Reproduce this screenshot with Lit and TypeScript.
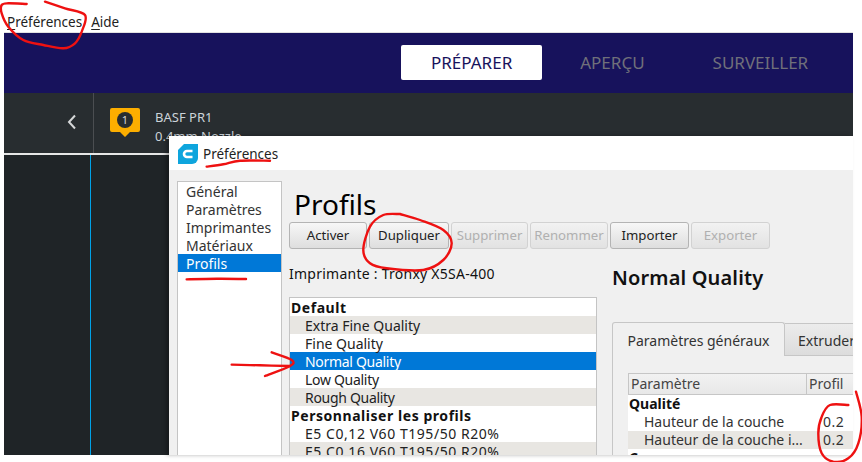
import { LitElement, html, css, svg } from "lit";
import { customElement } from "lit/decorators.js";

type P = [number, number];

function smooth(pts: P[]): string {
  let d = `M${pts[0][0]} ${pts[0][1]}`;
  for (let i = 0; i < pts.length - 1; i++) {
    const p0 = pts[Math.max(0, i - 1)];
    const p1 = pts[i];
    const p2 = pts[i + 1];
    const p3 = pts[Math.min(pts.length - 1, i + 2)];
    const c1x = p1[0] + (p2[0] - p0[0]) / 6;
    const c1y = p1[1] + (p2[1] - p0[1]) / 6;
    const c2x = p2[0] - (p3[0] - p1[0]) / 6;
    const c2y = p2[1] - (p3[1] - p1[1]) / 6;
    d += ` C${c1x.toFixed(1)} ${c1y.toFixed(1)} ${c2x.toFixed(1)} ${c2y.toFixed(1)} ${p2[0].toFixed(1)} ${p2[1].toFixed(1)}`;
  }
  return d;
}

const z = (ox: number, oy: number, pts: P[]): P[] => pts.map(([x, y]) => [ox + x / 3, oy + y / 3] as P);

const MARKS: P[][] = [
  z(0, 0, [[80, 12], [25, 10], [5, 15], [5, 40], [25, 80], [70, 120], [130, 135], [190, 145], [225, 130], [245, 95], [255, 45], [195, 25], [135, 5]]),
  z(160, 130, [[140, 110], [190, 103], [240, 92], [330, 92]]),
  z(170, 170, [[50, 328], [140, 326], [228, 327]]),
  z(170, 170, [[690, 132], [640, 135], [600, 170], [580, 240], [600, 280], [650, 295], [760, 300], [820, 270], [845, 220], [820, 180], [750, 150], [690, 132]]),
  z(170, 290, [[185, 224], [270, 226], [360, 228]]),
  z(170, 290, [[305, 187], [365, 210], [360, 228], [285, 258]]),
  z(600, 320, [[745, 255], [690, 255], [665, 290], [655, 340], [665, 400], [700, 425], [745, 415], [775, 370], [785, 290], [768, 215]]),
];

const SIDE = ["Général", "Paramètres", "Imprimantes", "Matériaux", "Profils"];
const BUTTONS: [string, boolean, number][] = [
  ["Activer", true, 78],
  ["Dupliquer", true, 80],
  ["Supprimer", false, 77],
  ["Renommer", false, 78],
  ["Importer", true, 79],
  ["Exporter", false, 79],
];
const ROWS: [string, string][] = [
  ["group", "Default"],
  ["alt", "Extra Fine Quality"],
  ["", "Fine Quality"],
  ["sel tight", "Normal Quality"],
  ["tight", "Low Quality"],
  ["alt tight", "Rough Quality"],
  ["group", "Personnaliser les profils"],
  ["wide", "E5 C0,12 V60 T195/50 R20%"],
  ["alt wide", "E5 C0,16 V60 T195/50 R20%"],
];

@customElement("app-root")
export class AppRoot extends LitElement {
  static styles = css`
    :host {
      display: block;
      position: relative;
      width: 862px;
      height: 462px;
      overflow: hidden;
      background: #fff;
      font-family: "Noto Sans", "Open Sans", sans-serif;
      font-size: 14px;
      color: #111;
    }
    .menu {
      display: flex;
      gap: 9px;
      height: 32px;
      padding: 11px 0 0 7px;
      box-sizing: border-box;
      line-height: 22px;
      font-size: 13.5px;
      color: #222;
    }
    .menu u { text-underline-offset: 2px; }
    .window {
      margin-left: 4px;
      width: 849px;
      height: 423px;
      display: flex;
      flex-direction: column;
      border-top: 1px solid #e2e2e2;
      box-sizing: border-box;
    }
    .nav {
      height: 60px;
      background: #17125c;
      display: flex;
      align-items: center;
      gap: 8px;
      padding: 0 0 1px 397px;
      box-sizing: border-box;
      font-size: 17px;
      color: #70707a;
    }
    .tab {
      height: 35px;
      line-height: 35px;
      padding: 0 30px;
      border-radius: 2px;
    }
    .tab.on { background: #fff; color: #17125c; }
    .sub {
      height: 60px;
      background: #282d30;
      border-bottom: 2px solid #e6e6e6;
      display: flex;
      align-items: center;
      flex: none;
    }
    .back {
      width: 90px;
      height: 60px;
      border-right: 1px solid #4b4e51;
      display: flex;
      align-items: center;
      justify-content: flex-end;
      padding: 0 16px 2px 0;
      box-sizing: border-box;
    }
    .badge { margin: 0 15px 0 16px; flex: none; }
    .printer { font-size: 13px; color: #ccd3d9; line-height: 19px; padding-top: 7px; }
    .printer span { display: block; }
    .stage { flex: 1; background: #1f2427; }
    .stage i { display: block; width: 1px; height: 100%; margin-left: 86px; background: #00a2e8; }
    .dialog {
      position: absolute;
      left: 169px;
      top: 136px;
      width: 684px;
      height: 319px;
      background: #f0f0f0;
      box-shadow: -3px 0 4px rgba(0, 0, 0, 0.3);
      display: flex;
      flex-direction: column;
      overflow: hidden;
    }
    .title {
      height: 34px;
      flex: none;
      background: #fff;
      display: flex;
      align-items: center;
      gap: 5px;
      padding: 2px 0 0 9px;
      box-sizing: border-box;
      font-size: 13.5px;
      color: #222;
    }
    .body { flex: 1; display: flex; padding: 11px 0 0 8px; gap: 7px; min-height: 0; }
    .side {
      width: 103px;
      flex: none;
      height: 300px;
      background: #fff;
      border: 1px solid #c4c4c4;
      color: #333;
    }
    .side div { height: 18px; line-height: 20px; padding-left: 8px; }
    .side .on { background: #0078d7; color: #fff; }
    .main { flex: 1; min-width: 0; display: flex; flex-direction: column; }
    h1 {
      margin: 0;
      height: 41px;
      padding-left: 5px;
      font-size: 28px;
      font-weight: 400;
      line-height: 47px;
      color: #000;
    }
    .btns { display: flex; gap: 2px; height: 27px; flex: none; }
    .btn {
      box-sizing: border-box;
      height: 27px;
      line-height: 25px;
      text-align: center;
      border: 1px solid #b4b4b4;
      border-radius: 3px;
      background: linear-gradient(#f7f7f7, #dedede);
      color: #222;
      font-size: 13.2px;
      white-space: nowrap;
      overflow: hidden;
    }
    .btn.off { color: #b0b0b0; border-color: #d2d2d2; background: linear-gradient(#f2f2f2, #e2e2e2); }
    .cols { display: flex; gap: 15px; min-width: 0; }
    .left { width: 308px; flex: none; }
    .printer-line { height: 48px; line-height: 50px; color: #111; white-space: nowrap; letter-spacing: 0.25px; }
    .list { border: 1px solid #c4c4c4; border-bottom: 0; background: #fff; height: 170px; box-sizing: border-box; }
    .list div { height: 18px; line-height: 20px; padding-left: 15px; color: #222; white-space: nowrap; }
    .list .group { padding-left: 1px; font-weight: 700; color: #111; letter-spacing: 0.55px; }
    .list .alt { background: #e8e6e2; }
    .list .sel { background: #0078d7; color: #fff; }
    .list .tight { letter-spacing: -0.3px; }
    .list .wide { letter-spacing: 0.55px; }
    .right { flex: 1; min-width: 0; }
    h2 { margin: 0; height: 73px; font-size: 20px; font-weight: 600; line-height: 58px; color: #111; white-space: nowrap; letter-spacing: 0.15px; }
    .tabs { display: flex; height: 34px; align-items: flex-end; }
    .t {
      box-sizing: border-box;
      height: 34px;
      line-height: 36px;
      white-space: nowrap;
      color: #333;
      border: 1px solid #c6c6c6;
      border-bottom: 0;
      border-radius: 3px 3px 0 0;
      background: #f0f0f0;
      width: 173px;
      text-align: center;
    }
    .t.b {
      flex: 1;
      width: auto;
      height: 33px;
      background: linear-gradient(#ececec, #dcdcdc);
      border-right: 0;
      border-left: 0;
      border-bottom: 1px solid #c6c6c6;
      border-radius: 0;
      overflow: hidden;
      text-align: left;
      padding-left: 13px;
      line-height: 33px;
    }
    .pane { padding: 17px 0 0 15px; border-left: 1px solid #c6c6c6; }
    .thead {
      display: flex;
      height: 22px;
      box-sizing: border-box;
      border: 1px solid #c6c6c6;
      border-right: 0;
      background: linear-gradient(#f2f2f2, #e8e8e8);
      line-height: 20px;
      color: #444;
    }
    .thead span:first-child { width: 178px; padding-left: 2px; box-sizing: border-box; border-right: 1px solid #c6c6c6; }
    .thead span:last-child { padding-left: 2px; }
    .tbody { background: #fff; }
    .tr { display: flex; height: 18px; line-height: 18px; color: #333; white-space: nowrap; }
    .tr.alt { background: #e8e6e2; }
    .tr.group { font-weight: 700; color: #111; padding-left: 1px; }
    .tr .n { width: 178px; padding-left: 16px; box-sizing: border-box; overflow: hidden; }
    .tr .v { padding-left: 17px; letter-spacing: 0.5px; }
    .ink { position: absolute; left: 0; top: 0; pointer-events: none; }
    .ink path { fill: none; stroke: #ee1111; stroke-width: 2.4; stroke-linecap: round; stroke-linejoin: round; }
  `;

  render() {
    return html`
      <div class="menu"><span><u>P</u>références</span><span><u>A</u>ide</span></div>
      <div class="window">
        <div class="nav">
          <div class="tab on">PRÉPARER</div>
          <div class="tab">APERÇU</div>
          <div class="tab">SURVEILLER</div>
        </div>
        <div class="sub">
          <div class="back">
            <svg width="10" height="16" viewBox="0 0 10 16"><path d="M8 1.5 2 8l6 6.5" fill="none" stroke="#d5d7d8" stroke-width="2"/></svg>
          </div>
          <svg class="badge" width="30" height="30" viewBox="0 0 30 30">
            <path d="M2 0h26a2 2 0 0 1 2 2v20a2 2 0 0 1-2 2H20l-5 5-5-5H2a2 2 0 0 1-2-2V2a2 2 0 0 1 2-2z" fill="#fcae00"/>
            <circle cx="15" cy="12" r="8" fill="#282d30"/>
            <text x="15" y="16" text-anchor="middle" font-size="11" fill="#d8dadb" font-family="Noto Sans">1</text>
          </svg>
          <div class="printer"><span>BASF PR1</span><span>0.4mm Nozzle</span></div>
        </div>
        <div class="stage"><i></i></div>
      </div>
      <div class="dialog">
        <div class="title">
          <svg width="20" height="20" viewBox="0 0 20 20">
            <path d="M6 0h14v14a6 6 0 0 1-6 6H0V6z" fill="#0ea5dd"/>
            <path d="M14.5 7H9a3 3 0 0 0 0 6h5.5" fill="none" stroke="#fff" stroke-width="2.6"/>
          </svg>
          <span>Préférences</span>
        </div>
        <div class="body">
          <div class="side">
            ${SIDE.map((s) => html`<div class=${s === "Profils" ? "on" : ""}>${s}</div>`)}
          </div>
          <div class="main">
            <h1>Profils</h1>
            <div class="btns">
              ${BUTTONS.map(([t, on, w]) => html`<div class="btn ${on ? "" : "off"}" style="width:${w}px">${t}</div>`)}
            </div>
            <div class="cols">
              <div class="left">
                <div class="printer-line">Imprimante : Tronxy X5SA-400</div>
                <div class="list">${ROWS.map(([c, t]) => html`<div class=${c}>${t}</div>`)}</div>
              </div>
              <div class="right">
                <h2>Normal Quality</h2>
                <div class="tabs"><div class="t">Paramètres généraux</div><div class="t b">Extruder</div></div>
                <div class="pane">
                  <div class="thead"><span>Paramètre</span><span>Profil</span></div>
                  <div class="tbody">
                    <div class="tr group">Qualité</div>
                    <div class="tr"><span class="n">Hauteur de la couche</span><span class="v">0.2</span></div>
                    <div class="tr alt"><span class="n">Hauteur de la couche i...</span><span class="v">0.2</span></div>
                    <div class="tr group">Coque</div>
                  </div>
                </div>
              </div>
            </div>
          </div>
        </div>
      </div>
      <svg class="ink" width="862" height="462" viewBox="0 0 862 462">
        ${MARKS.map((m) => svg`<path d=${smooth(m)}></path>`)}
      </svg>
    `;
  }
}
